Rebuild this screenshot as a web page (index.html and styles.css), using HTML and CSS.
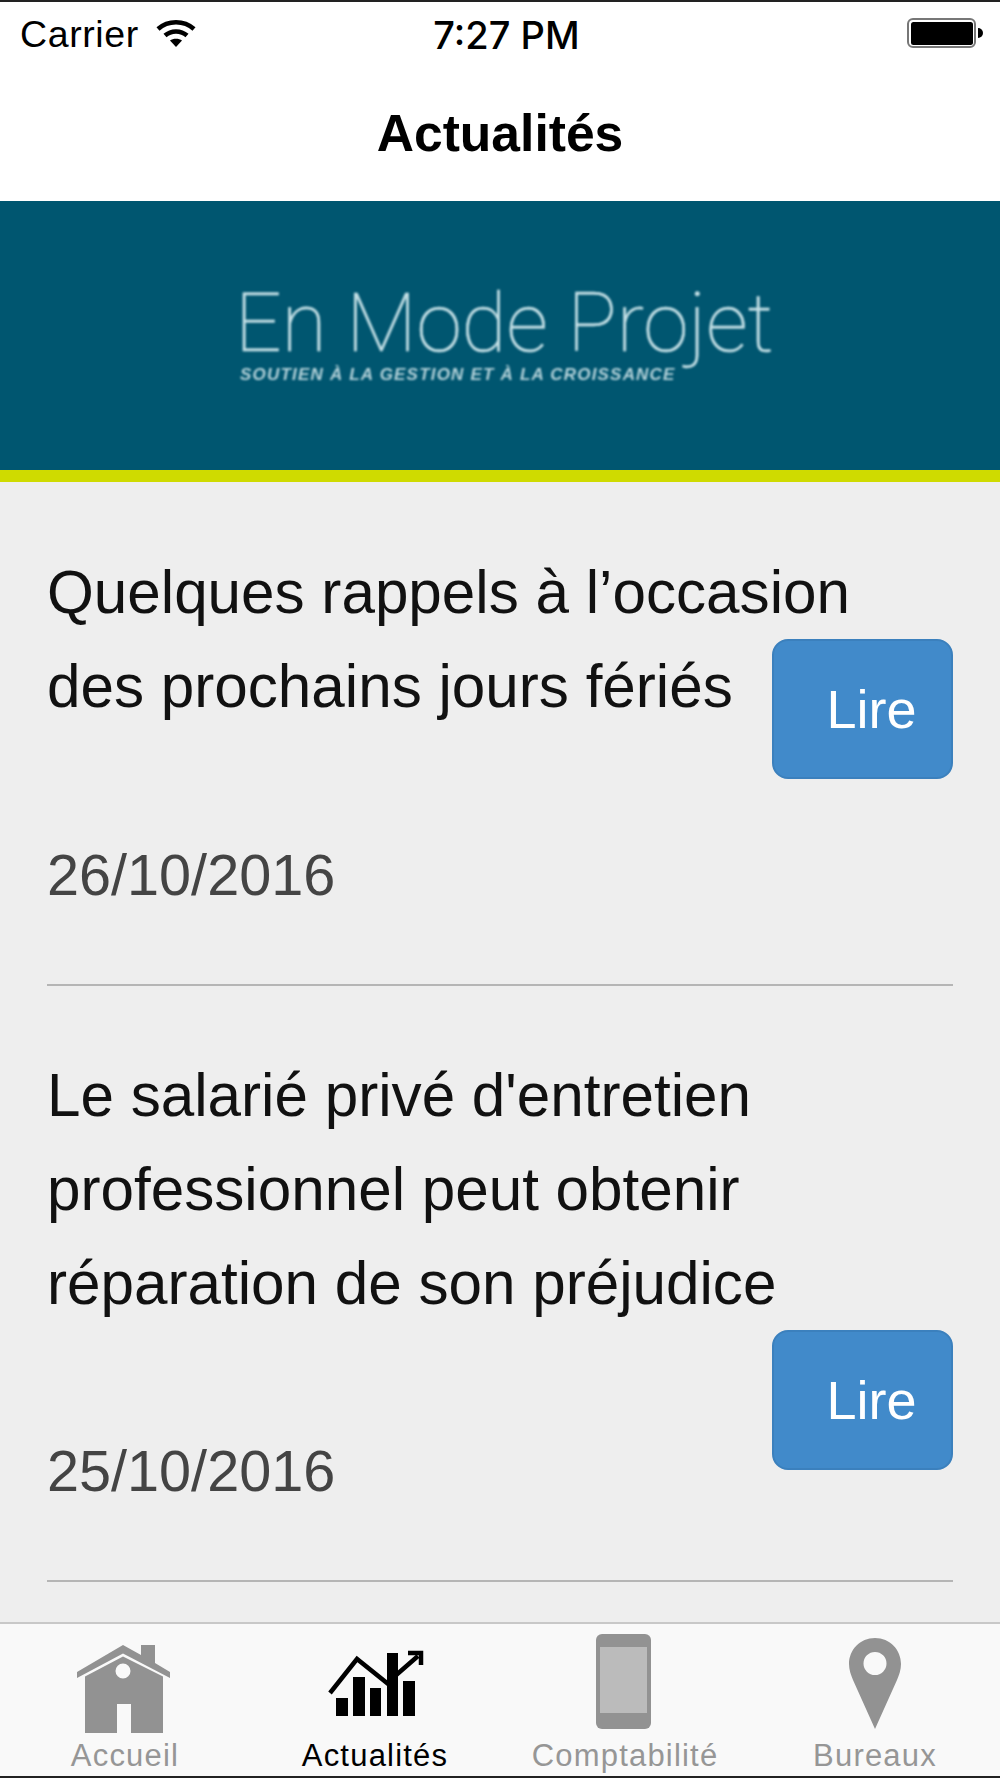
FILE: index.html
```html
<!DOCTYPE html>
<html lang="fr">
<head>
  <meta charset="UTF-8">
  <meta name="viewport" content="width=device-width, initial-scale=1.0">
  <title>Actualités</title>
  <link rel="stylesheet" href="styles.css">
</head>
<body>

<div class="app">
  <div class="status-bar">
    <div class="status-left">
      <span class="carrier">Carrier</span>
      <svg class="wifi" viewBox="0 0 40 28" width="40" height="28">
        <path d="M2 10 C12 1 28 1 38 10" fill="none" stroke="#000" stroke-width="4.5"/>
        <path d="M9 16.5 C15 11 25 11 31 16.5" fill="none" stroke="#000" stroke-width="4.5"/>
        <path d="M14 21.5 C17 19 23 19 26 21.5 L20 28 Z" fill="#000"/>
      </svg>
    </div>
    <span class="clock">7:27 PM</span>
    <div class="battery">
      <div class="battery-body"></div>
      <div class="battery-tip"></div>
    </div>
  </div>

  <header class="nav-bar">
    <h1>Actualités</h1>
  </header>

  <section class="banner">
    <div class="logo">
      <div class="logo-name">En Mode Projet</div>
      <div class="logo-tagline">Soutien à la gestion et à la croissance</div>
    </div>
  </section>

  <main class="news-list">
    <article class="news-item news-item-short">
      <h2>Quelques rappels à l’occasion des prochains jours fériés</h2>
      <p class="news-date">26/10/2016</p>
      <button class="read-btn">Lire</button>
    </article>
    <article class="news-item">
      <h2>Le salarié privé d'entretien professionnel peut obtenir réparation de son préjudice</h2>
      <p class="news-date">25/10/2016</p>
      <button class="read-btn">Lire</button>
    </article>
  </main>

  <nav class="tab-bar">
    <a class="tab">
      <svg viewBox="0 0 100 105" width="100" height="105">
        <path d="M48 15 L66 25 V15 H80 V33 L95 42 V48 L48 23.5 L2 48 V42 Z" fill="#929292"/>
        <path fill-rule="evenodd" fill="#929292" d="M10 46.5 L48 26.5 L88 46.5 V103 H56 V74 H42 V103 H10 Z M48 33.5 A7.5 7.5 0 1 0 48 48.5 A7.5 7.5 0 1 0 48 33.5 Z"/>
      </svg>
      <span>Accueil</span>
    </a>
    <a class="tab tab-active">
      <svg viewBox="0 0 100 105" width="100" height="105">
        <rect x="11" y="68" width="12" height="18"/>
        <rect x="28" y="47" width="12" height="39"/>
        <rect x="45" y="58" width="11" height="28"/>
        <rect x="62" y="23" width="11" height="63"/>
        <rect x="78" y="51" width="12" height="35"/>
        <path d="M5 63 L32 29 L62 53 L93 26" fill="none" stroke="#000" stroke-width="4.5"/>
        <path d="M83 23 H96 V35" fill="none" stroke="#000" stroke-width="4.5"/>
      </svg>
      <span>Actualités</span>
    </a>
    <a class="tab">
      <svg viewBox="0 0 100 105" width="100" height="105">
        <rect x="21" y="4" width="55" height="95" rx="6" fill="#929292"/>
        <rect x="25" y="17" width="47" height="66" fill="#bbb"/>
      </svg>
      <span>Comptabilité</span>
    </a>
    <a class="tab">
      <svg viewBox="0 0 100 105" width="100" height="105">
        <path fill-rule="evenodd" fill="#929292" d="M50 8 C65 8 76 20 76 34 C76 40 74 45 72 50 L50 99 L28 50 C26 45 24 40 24 34 C24 20 35 8 50 8 Z M50 22 A11.5 11.5 0 1 0 50 45 A11.5 11.5 0 1 0 50 22 Z"/>
      </svg>
      <span>Bureaux</span>
    </a>
  </nav>
</div>

</body>
</html>
```

FILE: styles.css
```css
* {
  box-sizing: border-box;
}
body {
  margin: 0;
  padding: 0;
  font-family: "Liberation Sans", Arial, sans-serif;
  background-color: #fff;
  color: #000;
}
.app {
  height: 1778px;
  display: flex;
  flex-direction: column;
  overflow: hidden;
  border-top: 2px solid #222;
  border-bottom: 2px solid #222;
}

/* status bar */
.status-bar {
  height: 62px;
  padding: 3px 17px 0 20px;
  display: grid;
  grid-template-columns: 1fr auto 1fr;
  align-items: center;
}
.status-left {
  display: flex;
  align-items: center;
  gap: 17px;
}
.carrier {
  font-size: 37.5px;
  letter-spacing: 0.6px;
}
.wifi {
  margin-top: -4px;
}
.clock {
  margin-left: 10px;
  font-family: Inter, "Liberation Sans", sans-serif;
  font-weight: 500;
  font-size: 38px;
}
.battery {
  justify-self: end;
  display: flex;
  align-items: center;
  margin-top: -3px;
}
.battery-body {
  width: 69px;
  height: 30px;
  padding: 1.5px;
  background-color: #000;
  background-clip: content-box;
  border: 2px solid #777;
  border-radius: 6px;
}
.battery-tip {
  width: 5px;
  height: 10px;
  margin-left: 2px;
  background-color: #000;
  border-radius: 0 5px 5px 0;
}

/* navigation title */
.nav-bar {
  height: 137px;
  display: flex;
  align-items: center;
  justify-content: center;
}
.nav-bar h1 {
  margin: 0;
  font-size: 51.6px;
  font-weight: 700;
}

/* banner with logo */
.banner {
  height: 281px;
  flex: none;
  background-color: #005670;
  border-bottom: 12px solid #cfdb00;
  display: flex;
  justify-content: center;
  padding-top: 80px;
}
.logo {
  width: 530px;
  filter: blur(0.9px);
}
.logo-name {
  font-family: Roboto, sans-serif;
  font-weight: 100;
  font-size: 82px;
  line-height: 84px;
  color: #c4e0e6;
  -webkit-text-stroke: 0.6px #c4e0e6;
  white-space: nowrap;
}
.logo-tagline {
  font-family: "Liberation Sans", sans-serif;
  font-weight: 700;
  font-style: italic;
  font-size: 17px;
  line-height: 18px;
  letter-spacing: 1.2px;
  margin: 1px 0 0 5px;
  text-transform: uppercase;
  color: #b5d3da;
  white-space: nowrap;
}

/* news list */
.news-list {
  flex: 1;
  min-height: 0;
  overflow: hidden;
  background-color: #eee;
  padding: 1px 47px 0;
}
.news-item {
  display: grid;
  grid-template-columns: 1fr 181px;
  padding-top: 63px;
  padding-bottom: 74px;
  border-bottom: 2px solid #b5b5b5;
}
.news-item h2 {
  grid-column: 1 / -1;
  grid-row: 1;
  margin: 0;
  font-size: 60.2px;
  font-weight: 400;
  line-height: 94px;
  color: #111;
}
.news-date {
  grid-column: 1;
  grid-row: 2;
  margin: 105px 0 0;
  font-size: 57.6px;
  line-height: 70px;
  color: #444;
}
.news-item-short .news-date {
  margin-top: 106px;
}
.read-btn {
  grid-column: 2;
  grid-row: 1 / 3;
  align-self: end;
  height: 140px;
  margin-bottom: 36px;
  padding: 0 0 0 18px;
  background-color: #418aca;
  border: 2px solid #3b80bd;
  border-radius: 16px;
  color: #fff;
  font-family: "Liberation Sans", Arial, sans-serif;
  font-size: 54px;
}
.news-item-short .read-btn {
  margin-bottom: 131px;
}

/* bottom tabs */
.tab-bar {
  flex: none;
  height: 154px;
  background-color: #f9f9f9;
  border-top: 2px solid #c8c8c8;
  display: grid;
  grid-template-columns: repeat(4, 1fr);
}
.tab {
  display: flex;
  flex-direction: column;
  align-items: center;
  padding-top: 6px;
  color: #969696;
  font-size: 31px;
  letter-spacing: 1.2px;
  line-height: 34px;
}
.tab svg {
  display: block;
  margin-bottom: 4px;
}
.tab-active {
  color: #000;
}
```
